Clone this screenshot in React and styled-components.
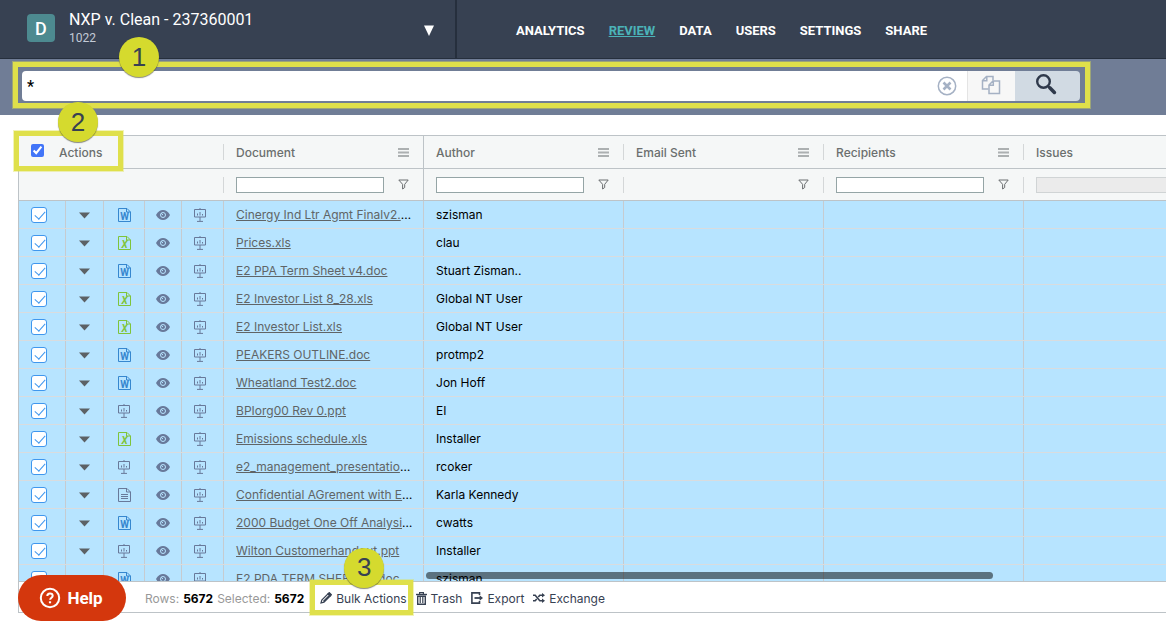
import { useState } from "react";
import styled, { createGlobalStyle, css } from "styled-components";

const GlobalStyle = createGlobalStyle`
  * {
    box-sizing: border-box;
  }

  body {
    margin: 0;
    background-color: #ffffff;
    font-family: Roboto, "Liberation Sans", sans-serif;
    overflow: hidden;
  }

  button,
  input {
    font-family: inherit;
  }
`;

const SPage = styled.div`
  height: 100vh;
  display: flex;
  flex-direction: column;
`;

const SHeader = styled.header`
  height: 59px;
  flex-shrink: 0;
  display: flex;
  background-color: #374152;
  border-bottom: 1px solid #262f3d;
`;

const SProject = styled.button`
  width: 457px;
  display: flex;
  align-items: center;
  gap: 14px;
  padding: 0 20px 2px 27px;
  border: none;
  border-right: 2px solid #262f3d;
  background: none;
  color: #ffffff;
  text-align: left;
`;

const SProjectLogo = styled.span`
  width: 28px;
  height: 28px;
  display: flex;
  align-items: center;
  justify-content: center;
  border-radius: 4px;
  background-color: #4d8a90;
  font-size: 18px;
  font-weight: 500;
`;

const SProjectInfo = styled.span`
  flex: 1;
  display: flex;
  flex-direction: column;
`;

const SProjectName = styled.span`
  font-size: 16px;
  line-height: 20px;
  font-weight: 400;
`;

const SProjectNumber = styled.span`
  font-size: 12px;
  line-height: 16px;
  color: #c3cad6;
`;

const SNav = styled.nav`
  display: flex;
  align-items: center;
  gap: 24px;
  padding: 3px 0 0 59px;
`;

const SNavLink = styled.a`
  font-size: 13px;
  line-height: 16px;
  font-weight: 700;
  text-transform: uppercase;
  color: ${({ $active }) => ($active ? "#4bb3b8" : "#ffffff")};
  text-decoration: ${({ $active }) => ($active ? "underline" : "none")};
`;

const SSearchBar = styled.div`
  height: 56px;
  flex-shrink: 0;
  padding: 12px 86px 0 22px;
  background-color: #707d96;
`;

const SSearchForm = styled.form`
  position: relative;
  height: 30px;
  display: flex;
`;

const SSearchField = styled.div`
  flex: 1;
  display: flex;
  align-items: center;
  padding-right: 10px;
  border-radius: 4px 0 0 4px;
  background-color: #ffffff;
`;

const SSearchInput = styled.input`
  flex: 1;
  min-width: 0;
  padding: 0 5px;
  border: none;
  outline: none;
  background: none;
  font-size: 16px;
  font-weight: 500;
  color: #000000;
`;

const SIconButton = styled.button`
  display: flex;
  align-items: center;
  justify-content: center;
  padding: 0;
  border: none;
  background: none;
  color: #a5b1c4;
`;

const SCopyButton = styled(SIconButton)`
  width: 48px;
  padding: 0 2px 2px 0;
  border-left: 1px solid #e4e4e4;
  background-color: #f7f7f7;
`;

const SSearchButton = styled(SIconButton)`
  width: 65px;
  padding: 0 4px 4px 0;
  border-radius: 0 4px 4px 0;
  background-color: #d1dae3;
  color: #2f394b;
`;

// жёлтая рамка и кружок с номером шага
const SMark = styled.span`
  position: absolute;
  z-index: 2;
  inset: ${({ $inset }) => $inset};
  width: ${({ $width }) => $width || "auto"};
  height: ${({ $height }) => $height || "auto"};
  border: 5px solid #dfe04b;
  box-shadow: 0 0 0 1px rgba(223, 224, 75, 0.4);
  pointer-events: none;
`;

const SStep = styled.span`
  position: absolute;
  z-index: 3;
  left: ${({ $left }) => $left}px;
  top: ${({ $top }) => $top}px;
  width: 40px;
  height: 40px;
  display: flex;
  align-items: center;
  justify-content: center;
  border-radius: 50%;
  background-color: #d5da2e;
  box-shadow: 0 1px 1px rgba(60, 60, 40, 0.6);
  font-family: "Liberation Sans", Arial, sans-serif;
  font-size: 26px;
  font-weight: 400;
  color: #374152;
  pointer-events: none;
`;

const SGrid = styled.main`
  position: relative;
  flex: 1;
  min-height: 0;
  display: flex;
  flex-direction: column;
  margin: 20px 0 16px 18px;
  border: 1px solid #bdc3c7;
  border-right: none;
  font-family: Inter, Roboto, sans-serif;
`;

const SGridBody = styled.div`
  position: relative;
  flex: 1;
  min-height: 0;
  overflow: hidden;
`;

const STable = styled.table`
  width: 1205px;
  table-layout: fixed;
  border-collapse: separate;
  border-spacing: 0;
`;

const SHeadCell = styled.th`
  height: ${({ $height }) => $height}px;
  padding: 0;
  border-bottom: 1px solid #bdc3c7;
  background-color: #f5f7f7;
  font-weight: 500;
  text-align: left;
  ${({ $pinned }) =>
    $pinned &&
    css`
      border-right: 1px solid #bdc3c7;
    `}
`;

const SHeadContent = styled.div`
  height: 16px;
  display: flex;
  align-items: center;
  justify-content: space-between;
  padding: 0 ${({ $pinned }) => ($pinned ? 13 : 14)}px 0 12px;
  border-right: 1px solid
    ${({ $separator }) => ($separator ? "#d4d7d8" : "transparent")};
  font-size: 12px;
  color: #6b6f6e;
`;

const SSelectAll = styled.label`
  display: flex;
  align-items: center;
  gap: 15px;
`;

const SSelectAllInput = styled.input`
  width: 13px;
  height: 13px;
  margin: 0 0 4px;
  accent-color: #4275f8;
`;

const SFilterInput = styled.input`
  width: ${({ $wide }) => ($wide ? "100%" : "148px")};
  height: 16px;
  padding: 0 4px;
  border: 1px solid #95a5a6;
  border-radius: 0;
  background-color: #ffffff;
  font-size: 12px;

  &:disabled {
    border-color: #d0d4d5;
    background-color: #ebebeb;
  }
`;

const SCell = styled.td`
  height: 28px;
  padding: 0;
  border-bottom: 1px solid #d9dcde;
  background-color: #b7e4ff;
`;

const SCellContent = styled.div`
  height: 27px;
  padding: 0 8px 0 12px;
  border-right: 1px solid #c6cbd0;
  font-size: 12px;
  line-height: 28px;
  color: #000000;
  white-space: nowrap;
  overflow: hidden;
  text-overflow: ellipsis;
`;

const SIconCell = styled(SCellContent)`
  display: flex;
  align-items: center;
  justify-content: ${({ $center }) => ($center ? "center" : "flex-start")};
  padding: ${({ $center }) => ($center ? "0" : "0 0 0 12px")};
`;

const SDocLink = styled.a`
  color: #606466;
`;

const SCheckbox = styled.input`
  appearance: none;
  position: relative;
  width: 16px;
  height: 16px;
  margin: 0;
  border: 1px solid #3f97ee;
  border-radius: 3px;
  background-color: #ffffff;

  &:checked::after {
    content: "";
    position: absolute;
    left: 5px;
    top: 1px;
    width: 5px;
    height: 9px;
    border: solid #3f97ee;
    border-width: 0 1px 1px 0;
    transform: rotate(42deg);
  }
`;

const SScrollThumb = styled.div`
  position: absolute;
  left: 407px;
  right: 173px;
  bottom: 2px;
  height: 7px;
  border-radius: 4px;
  background-color: rgba(0, 0, 0, 0.5);
`;

const SFooter = styled.footer`
  height: 31px;
  flex-shrink: 0;
  display: flex;
  align-items: center;
  gap: 9px;
  padding: 2px 0 0 126px;
  border-top: 1px solid #bdc3c7;
  font-size: 12px;
  color: #999999;
`;

const SCounts = styled.div`
  display: flex;
  gap: 4px;
  margin-right: 7px;
`;

const SCount = styled.strong`
  font-weight: 700;
  color: #000000;
`;

const SFooterButton = styled.button`
  position: relative;
  display: flex;
  align-items: center;
  gap: 4px;
  padding: 0;
  border: none;
  background: none;
  font-size: 12px;
  color: #374152;
`;

const SHelpButton = styled.button`
  position: fixed;
  z-index: 4;
  left: 18px;
  bottom: 8px;
  width: 108px;
  height: 46px;
  display: flex;
  align-items: center;
  justify-content: center;
  gap: 6px;
  padding: 0 2px 0 0;
  border: none;
  border-radius: 23px;
  background-color: #d4370d;
  font-size: 17px;
  font-weight: 700;
  color: #ffffff;
`;

const ArrowIcon = () => (
  <svg width="12" height="16" viewBox="0 0 12 16">
    <path d="M1 5.500h10L6 16z" fill="currentColor" />
  </svg>
);

const ClearIcon = () => (
  <svg width="20" height="20" viewBox="0 0 20 20" fill="none" stroke="currentColor">
    <circle cx="10" cy="10" r="8.7" strokeWidth="1.5" />
    <path d="M6.5 6.5l7 7M13.5 6.5l-7 7" strokeWidth="2.6" />
  </svg>
);

const CopyIcon = () => (
  <svg width="20" height="20" viewBox="0 0 20 20" fill="none" stroke="currentColor" strokeWidth="1.5">
    <path d="M7.5 14H1.5V5.5L5.5 1.5H12V5.5M5.8 1.5V5.8H1.5" />
    <path d="M12 6H18.5V18.5H8V10zM12.3 6V10.3H8" />
  </svg>
);

const SearchIcon = () => (
  <svg width="22" height="22" viewBox="0 0 22 22" fill="none" stroke="currentColor">
    <circle cx="8.5" cy="8.5" r="6.3" strokeWidth="2.4" />
    <path d="M13 13l1.6 1.6" strokeWidth="2.4" />
    <path d="M14.8 14.8l4.6 4.6" strokeWidth="3.6" strokeLinecap="round" />
  </svg>
);

const MenuIcon = () => (
  <svg width="11" height="9" viewBox="0 0 11 9">
    <path d="M0 0h11v2H0zM0 3.5h11v2H0zM0 7h11v2H0z" fill="#acb0b1" />
  </svg>
);

const FilterIcon = () => (
  <svg width="11" height="11" viewBox="0 0 11 11" fill="none" stroke="#6a6e70">
    <path d="M.8 1h9.4L6.7 5.3v3.2L4.6 10V5.3z" />
  </svg>
);

const CaretIcon = () => (
  <svg width="13" height="9" viewBox="0 0 13 9">
    <path d="M1 2.500h11L6.5 8.500z" fill="#5c6165" />
  </svg>
);

const EyeIcon = () => (
  <svg width="14" height="12" viewBox="0 0 14 12">
    <path d="M0 6C1.800 2.600 4.200 1 7 1s5.200 1.600 7 5c-1.800 3.400-4.200 5-7 5S1.800 9.400 0 6z" fill="#68799a" />
    <circle cx="7" cy="6" r="2.500" fill="none" stroke="#b7e4ff" strokeWidth="1" />
    <path d="M7 6l-1.800-1.600" stroke="#b7e4ff" strokeWidth="1" />
  </svg>
);

const ChartIcon = () => (
  <svg width="12" height="14" viewBox="0 0 12 14" fill="none" stroke="#68799a">
    <path d="M.5 1.500h11v7.500H.5zM6 0v1.500M6 9v4.200M3 13.400h6" />
    <path d="M3.500 5.500v2M6 4v3.500M8.500 6v1.500" />
  </svg>
);

const FileIcon = ({ type }) => {
  const color = { W: "#3687cf", X: "#7fc43a", text: "#68799a" }[type];

  return (
    <svg width="13" height="14" viewBox="0 0 13 14" fill="none" stroke={color}>
      <path d="M.5.5h8.500l3.500 3.500v9.500H.5zM8.500.5V4h4" />
      {type === "text" ? (
        <path d="M3 6.500h7M3 8.500h7M3 10.500h7" />
      ) : (
        <text
          x="6.500"
          y="12"
          textAnchor="middle"
          fontFamily="Roboto, sans-serif"
          fontSize={10}
          fontStyle={type === "X" ? "italic" : "normal"}
          fontWeight="700"
          fill={color}
          stroke="none"
        >
          {type}
        </text>
      )}
    </svg>
  );
};

const PencilIcon = () => (
  <svg width="12" height="12" viewBox="0 0 12 12" fill="none" stroke="currentColor">
    <path d="M1 11l.8-3L8 1.800 10.200 4 4 10.200z" strokeWidth="1.200" />
    <path d="M8.300 1.600l1-.9 2 2-.9 1z" strokeWidth="1.300" fill="currentColor" />
    <path d="M3.500 9.500L9.500 3.500" strokeWidth="1.600" />
  </svg>
);

const TrashIcon = () => (
  <svg width="11" height="13" viewBox="0 0 11 13" fill="none" stroke="currentColor">
    <path d="M0 2.500h11" strokeWidth="1.400" />
    <path d="M3.600 2V.7h3.800V2" strokeWidth="1.200" />
    <path d="M1.700 4.200h7.600V12.200H1.700z" strokeWidth="1.400" />
    <path d="M4.200 5v6M6.800 5v6" strokeWidth="1.200" />
  </svg>
);

const ExportIcon = () => (
  <svg width="12" height="12" viewBox="0 0 12 12" fill="none" stroke="currentColor" strokeWidth="1.600">
    <path d="M8.500 3V.9H.9v10.200h7.600V9" />
    <path d="M3.500 6h6" strokeWidth="1.800" />
    <path d="M8.600 3.200L12 6 8.600 8.800z" fill="currentColor" stroke="none" />
  </svg>
);

const ExchangeIcon = () => (
  <svg width="12" height="12" viewBox="0 0 12 12" fill="none" stroke="currentColor" strokeWidth="1.600">
    <path d="M0 3.300h2.200l4.600 5.400H9.500M0 8.700h2.200l1.500-1.800M5.300 5.100l1.500-1.800H9.500" />
    <path d="M9 1l3 2.300L9 5.600zM9 6.400l3 2.300L9 11z" fill="currentColor" stroke="none" />
  </svg>
);

const HelpIcon = () => (
  <svg width="22" height="22" viewBox="0 0 22 22" fill="none" stroke="currentColor" strokeWidth="2">
    <circle cx="11" cy="11" r="9.200" />
    <path d="M8.300 9c0-1.700 1.200-2.600 2.700-2.600s2.700.9 2.700 2.400c0 1.900-2.600 1.900-2.600 4" />
    <path d="M11 14.300v2" strokeWidth="2.200" />
  </svg>
);

const navItems = ["Analytics", "Review", "Data", "Users", "Settings", "Share"];

const columns = [
  { title: "Document", filter: "text", pinned: true },
  { title: "Author", filter: "text" },
  { title: "Email Sent", filter: "date" },
  { title: "Recipients", filter: "text" },
  { title: "Issues", filter: "disabled" },
];

const columnWidths = [47, 38, 41, 37, 42, 200, 200, 200, 200, 200];

const documents = [
  { type: "W", name: "Cinergy Ind Ltr Agmt Finalv2.doc", author: "szisman" },
  { type: "X", name: "Prices.xls", author: "clau" },
  { type: "W", name: "E2 PPA Term Sheet v4.doc", author: "Stuart Zisman.." },
  { type: "X", name: "E2 Investor List 8_28.xls", author: "Global NT User" },
  { type: "X", name: "E2 Investor List.xls", author: "Global NT User" },
  { type: "W", name: "PEAKERS OUTLINE.doc", author: "protmp2" },
  { type: "W", name: "Wheatland Test2.doc", author: "Jon Hoff" },
  { type: "chart", name: "BPIorg00 Rev 0.ppt", author: "EI" },
  { type: "X", name: "Emissions schedule.xls", author: "Installer" },
  { type: "chart", name: "e2_management_presentation.ppt", author: "rcoker" },
  { type: "text", name: "Confidential AGrement with Enron.txt", author: "Karla Kennedy" },
  { type: "W", name: "2000 Budget One Off Analysis.doc", author: "cwatts" },
  { type: "chart", name: "Wilton Customerhandout.ppt", author: "Installer" },
  { type: "W", name: "E2 PDA TERM SHEET v4.doc", author: "szisman" },
];

const App = () => {
  const [query, setQuery] = useState("*");
  const [selected, setSelected] = useState(documents.map(() => true));

  const handleSelectAll = (event) => {
    setSelected(documents.map(() => event.target.checked));
  };

  const handleSelect = (index) => {
    setSelected(selected.map((value, i) => (i === index ? !value : value)));
  };

  return (
    <>
      <GlobalStyle />
      <SPage>
        <SHeader>
          <SProject type="button">
            <SProjectLogo>D</SProjectLogo>
            <SProjectInfo>
              <SProjectName>NXP v. Clean - 237360001</SProjectName>
              <SProjectNumber>1022</SProjectNumber>
            </SProjectInfo>
            <ArrowIcon />
          </SProject>
          <SNav>
            {navItems.map((item) => (
              <SNavLink key={item} href="#" $active={item === "Review"}>
                {item}
              </SNavLink>
            ))}
          </SNav>
        </SHeader>

        <SSearchBar>
          <SSearchForm onSubmit={(event) => event.preventDefault()}>
            <SSearchField>
              <SSearchInput
                aria-label="Search"
                value={query}
                onChange={(event) => setQuery(event.target.value)}
              />
              <SIconButton type="button" aria-label="Clear" onClick={() => setQuery("")}>
                <ClearIcon />
              </SIconButton>
            </SSearchField>
            <SCopyButton type="button" aria-label="Copy">
              <CopyIcon />
            </SCopyButton>
            <SSearchButton type="submit" aria-label="Search">
              <SearchIcon />
            </SSearchButton>
            <SMark $inset="-9px -10px -7px -9px" />
            <SStep $left={97} $top={-34}>1</SStep>
          </SSearchForm>
        </SSearchBar>

        <SGrid>
          <SGridBody>
            <STable>
              <colgroup>
                {columnWidths.map((width, index) => (
                  <col key={index} width={width} />
                ))}
              </colgroup>
              <thead>
                <tr>
                  <SHeadCell colSpan={5} $height={33}>
                    <SHeadContent $separator>
                      <SSelectAll>
                        <SSelectAllInput
                          type="checkbox"
                          checked={selected.every(Boolean)}
                          onChange={handleSelectAll}
                        />
                        Actions
                      </SSelectAll>
                    </SHeadContent>
                  </SHeadCell>
                  {columns.map(({ title, filter, pinned }) => (
                    <SHeadCell key={title} $height={33} $pinned={pinned}>
                      <SHeadContent $separator={!pinned} $pinned={pinned}>
                        {title}
                        {filter !== "disabled" && <MenuIcon />}
                      </SHeadContent>
                    </SHeadCell>
                  ))}
                </tr>
                <tr>
                  <SHeadCell colSpan={5} $height={32}>
                    <SHeadContent $separator />
                  </SHeadCell>
                  {columns.map(({ title, filter, pinned }) => (
                    <SHeadCell key={title} $height={32} $pinned={pinned}>
                      <SHeadContent $separator={!pinned} $pinned={pinned}>
                        {filter === "date" ? (
                          <span />
                        ) : (
                          <SFilterInput
                            aria-label={`Filter ${title}`}
                            disabled={filter === "disabled"}
                            $wide={filter === "disabled"}
                          />
                        )}
                        {filter !== "disabled" && <FilterIcon />}
                      </SHeadContent>
                    </SHeadCell>
                  ))}
                </tr>
              </thead>
              <tbody>
                {documents.map(({ type, name, author }, index) => (
                  <tr key={name}>
                    <SCell>
                      <SIconCell>
                        <SCheckbox
                          type="checkbox"
                          aria-label={name}
                          checked={selected[index]}
                          onChange={() => handleSelect(index)}
                        />
                      </SIconCell>
                    </SCell>
                    <SCell>
                      <SIconCell $center>
                        <CaretIcon />
                      </SIconCell>
                    </SCell>
                    <SCell>
                      <SIconCell $center>
                        {type === "chart" ? <ChartIcon /> : <FileIcon type={type} />}
                      </SIconCell>
                    </SCell>
                    <SCell>
                      <SIconCell $center>
                        <EyeIcon />
                      </SIconCell>
                    </SCell>
                    <SCell>
                      <SIconCell>
                        <ChartIcon />
                      </SIconCell>
                    </SCell>
                    <SCell>
                      <SCellContent>
                        <SDocLink href="#">{name}</SDocLink>
                      </SCellContent>
                    </SCell>
                    <SCell>
                      <SCellContent>{author}</SCellContent>
                    </SCell>
                    <SCell>
                      <SCellContent />
                    </SCell>
                    <SCell>
                      <SCellContent />
                    </SCell>
                    <SCell>
                      <SCellContent />
                    </SCell>
                  </tr>
                ))}
              </tbody>
            </STable>
            <SScrollThumb />
          </SGridBody>

          <SMark $inset="-5px auto auto -5px" $width="109px" $height="40px" />
          <SStep $left={39} $top={-34}>2</SStep>

          <SFooter>
            <SCounts>
              <span>Rows:</span>
              <SCount>5672</SCount>
              <span>Selected:</span>
              <SCount>5672</SCount>
            </SCounts>
            <SFooterButton type="button">
              <PencilIcon />
              Bulk Actions
              <SMark $inset="-11px -6px -9px -10px" />
              <SStep $left={24} $top={-43}>3</SStep>
            </SFooterButton>
            <SFooterButton type="button">
              <TrashIcon />
              Trash
            </SFooterButton>
            <SFooterButton type="button">
              <ExportIcon />
              Export
            </SFooterButton>
            <SFooterButton type="button">
              <ExchangeIcon />
              Exchange
            </SFooterButton>
          </SFooter>
        </SGrid>

        <SHelpButton type="button">
          <HelpIcon />
          Help
        </SHelpButton>
      </SPage>
    </>
  );
};

export default App;
